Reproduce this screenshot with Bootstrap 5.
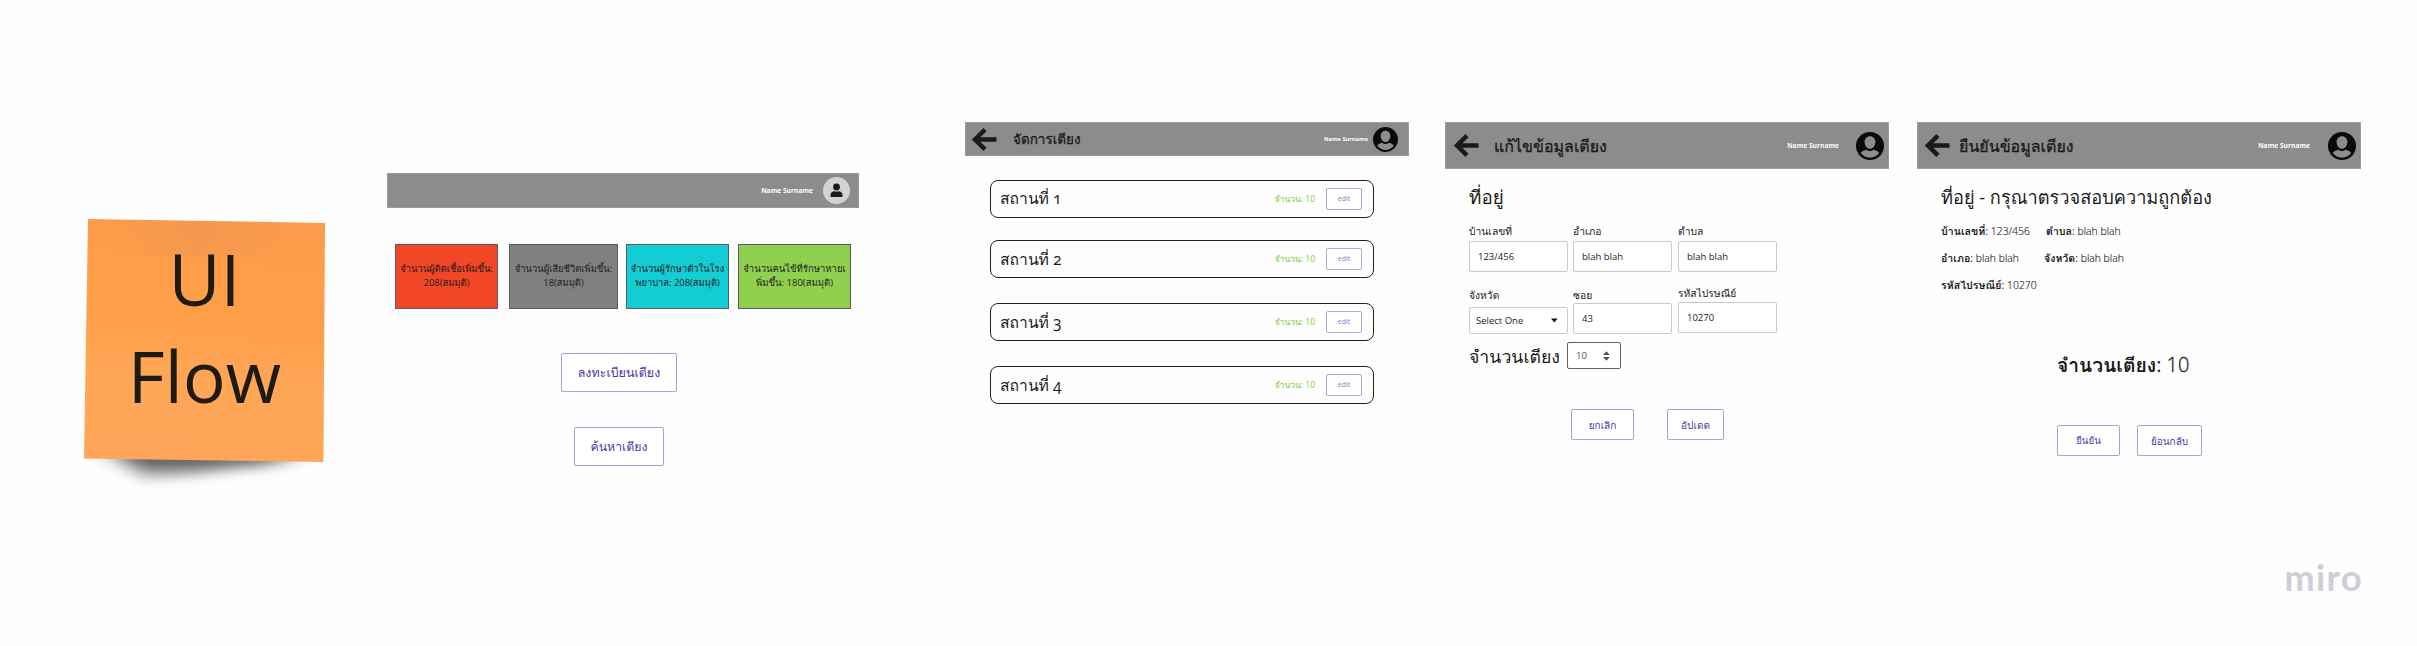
<!DOCTYPE html>
<html lang="th">
<head>
<meta charset="utf-8">
<meta name="viewport" content="width=device-width, initial-scale=1">
<title>UI Flow</title>
<link href="https://cdn.jsdelivr.net/npm/bootstrap@5.3.0/dist/css/bootstrap.min.css" rel="stylesheet">
<style>
body{width:2417px;height:646px;overflow:hidden;background:#fefefe;color:#1a1a1a;font-family:"Open Sans",Loma,"Noto Sans Thai",sans-serif;font-size:10px;line-height:14px}
/* board */
.board{height:540px}
.sticky-note{width:240px;margin:200px 0 0 84px;height:320px}
.sticky-bg{left:-24px;top:0}
.sticky-text{font-size:71.5px;line-height:97px;padding:30px 0 0 1px;width:240px;color:#1e1a14}
/* shared bar */
.topbar{background:#8c8c8c;border:1px solid #9c9c9c;height:47px}
.topbar .title{color:#1a1a1a;line-height:24px;-webkit-text-stroke:.3px #1a1a1a}
.user-name{color:#fff;font-weight:700;line-height:12px;font-size:6.7px}
.btn-wire{border:1px solid #a3a3d6;border-radius:2px;background:#fff;color:#3f3d9e;padding:0;line-height:14px;display:flex;align-items:center;justify-content:center}
/* home */
.home{width:472px;margin:173px 0 0 63px}
.home .topbar{height:35px}
.stat{height:65px;border:1px solid #5c5c5c;font-size:9.4px;line-height:14px;padding-top:17px;white-space:nowrap;text-align:center;color:#241c1c}
.stat-red{width:103px;background:#f24726;margin-right:11px}
.stat-gray{width:109px;background:#808080;margin-right:8px}
.stat-cyan{width:103px;background:#12cdd4;margin-right:9px}
.stat-green{width:113px;background:#8fd14f;font-size:9.5px}
/* list */
.places{width:444px;margin:122px 0 0 106px}
.places .topbar{height:34px}
.place{width:384px;height:38px;border:1.4px solid #222;border-radius:8px;margin-left:25px;padding:0 11px 0 9px}
.place-name{font-size:15.7px;line-height:24px;margin-top:-1px}
.place-name .num{font-variant-numeric:oldstyle-nums}
.place-qty{color:#82cc3c;font-size:8.5px;margin-right:11px;white-space:nowrap}
.place .btn-wire{width:36px;height:22px;font-size:7px;color:#7f7fc6;border-color:#a9addc}
/* form */
.form-screen{width:444px;margin:122px 0 0 36px}
.field-label{font-size:10.3px;line-height:14px;white-space:nowrap}
.fields{margin-left:24px}
.box{border:1px solid #c9c9c9;border-radius:2px;background:#fff;width:99px;height:31px;padding-left:8px;display:flex;align-items:center;font-size:9.5px}
.spin{border:1.3px solid #606060;width:54px;height:27px;padding:0 10px 0 8px;color:#555}
/* confirm */
.confirm{width:444px;margin:122px 0 0 28px}
.facts{margin-left:24px;font-size:10.6px;white-space:nowrap}
.facts .val,.total .val{font-weight:300}
.facts .val{font-size:10.4px;-webkit-text-stroke:.15px #1a1a1a}
.total .val{-webkit-text-stroke:.3px #1a1a1a}
.facts .key{font-weight:700}
.facts>div{height:27px}
.brand{font-family:"Lato",sans-serif;font-weight:700;font-size:36px;line-height:40px;color:#cfcdd8;letter-spacing:1.4px}
</style>
</head>
<body>
<svg class="d-none">
  <symbol id="arrow" viewBox="0 0 25 25"><path d="M13 2.6 3 12.5l10 9.900M3.500 12.500h21" fill="none" stroke="#1a1a1a" stroke-width="4.4"/></symbol>
  <symbol id="avatar" viewBox="0 0 28 28"><circle cx="14" cy="14" r="14" fill="#090909"/><path d="M14 4.200c3.300 0 5.400 2.500 5.400 5.800 0 3.400-2.300 6.800-5.400 6.800S8.600 13.400 8.600 10c0-3.300 2.100-5.800 5.400-5.800zM4.800 21c1.200-1.900 3.400-2.900 5.600-3.300 1 .9 2.200 1.400 3.600 1.400s2.600-.5 3.600-1.400c2.200.4 4.400 1.400 5.600 3.300-2.200 2.900-5.500 4.700-9.200 4.700S7 23.900 4.800 21z" fill="#8c8c8c"/></symbol>
</svg>
<main class="board d-flex align-items-start">
  <section class="sticky-note position-relative flex-shrink-0">
    <svg class="sticky-bg position-absolute" width="300" height="320" viewBox="0 0 300 320">
      <defs>
        <linearGradient id="paper" x1="0.1" y1="0" x2="0" y2="1"><stop offset="0" stop-color="#fc9b4b"/><stop offset=".15" stop-color="#ff9d48"/><stop offset=".4" stop-color="#ff9f4a"/><stop offset=".62" stop-color="#ffa757"/><stop offset="1" stop-color="#ffa55a"/></linearGradient>
        <linearGradient id="top" x1="0" x2="1"><stop offset="0" stop-color="#ee9650" stop-opacity="0"/><stop offset=".45" stop-color="#ee9650" stop-opacity=".6"/><stop offset="1" stop-color="#ee9650" stop-opacity="0"/></linearGradient>
        <filter id="soft" x="-20%" y="-60%" width="140%" height="240%"><feGaussianBlur stdDeviation="6"/></filter>
      </defs>
      <path d="M34 252Q140 250 250 256Q226 268 185 270Q125 280 82 280Q62 268 34 254Z" fill="#000" opacity=".22" filter="url(#soft)"/>
      <path d="M54 250H236Q215 264 175 265Q120 271 88 269Q66 262 54 250Z" fill="#000" opacity=".5" filter="url(#soft)"/>
      <path d="M28 19 265 23 263.500 262 24 258.500Z" fill="url(#paper)"/>
      <path d="M50 20 240 22.500V54L50 57Z" fill="url(#top)"/>
    </svg>
    <div class="sticky-text position-relative text-center">UI<br>Flow</div>
  </section>

  <section class="home flex-shrink-0">
    <div class="topbar d-flex align-items-center justify-content-end pe-2">
      <span class="user-name" style="margin-right:10px">Name Surname</span>
      <svg width="27" height="27" viewBox="0 0 27 27"><circle cx="13.500" cy="13.500" r="13.500" fill="#d3d3d3"/><circle cx="13.500" cy="10" r="3.400" fill="#1a1a1a"/><path d="M7.500 20v-1.800c0-2.500 1.800-4 4-4 1.300.6 2.700.6 4 0 2.200 0 4 1.500 4 4V20z" fill="#1a1a1a"/></svg>
    </div>
    <div class="d-flex" style="margin:36px 0 0 8px">
      <div class="stat stat-red">จำนวนผู้ติดเชื้อเพิ่มขึ้น:<br>208(สมมุติ)</div>
      <div class="stat stat-gray">จำนวนผู้เสียชีวิตเพิ่มขึ้น:<br>18(สมมุติ)</div>
      <div class="stat stat-cyan">จำนวนผู้รักษาตัวในโรง<br>พยาบาล: 208(สมมุติ)</div>
      <div class="stat stat-green">จำนวนคนไข้ที่รักษาหายเ<br>พิ่มขึ้น: 180(สมมุติ)</div>
    </div>
    <div class="d-flex flex-column align-items-center" style="margin:44px 8px 0 0;gap:35px">
      <button class="btn btn-wire" style="width:116px;height:39px;font-size:12.500px">ลงทะเบียนเตียง</button>
      <button class="btn btn-wire" style="width:90px;height:39px;font-size:12.300px">ค้นหาเตียง</button>
    </div>
  </section>

  <section class="places flex-shrink-0">
    <div class="topbar d-flex align-items-center" style="padding:0 10px 0 6px">
      <svg width="25" height="25"><use href="#arrow"/></svg>
      <span class="title" style="font-size:13.500px;margin-left:16px">จัดการเตียง</span>
      <span class="user-name ms-auto" style="font-size:5.700px;margin-right:5px">Name Surname</span>
      <svg width="25" height="25"><use href="#avatar"/></svg>
    </div>
    <div class="place d-flex align-items-center" style="margin-top:23.500px"><span class="place-name me-auto">สถานที่ <span class="num">1</span></span><span class="place-qty">จำนวน: 10</span><button class="btn btn-wire">edit</button></div>
    <div class="place d-flex align-items-center" style="margin-top:22.500px"><span class="place-name me-auto">สถานที่ <span class="num">2</span></span><span class="place-qty">จำนวน: 10</span><button class="btn btn-wire">edit</button></div>
    <div class="place d-flex align-items-center" style="margin-top:25px"><span class="place-name me-auto">สถานที่ <span class="num">3</span></span><span class="place-qty">จำนวน: 10</span><button class="btn btn-wire">edit</button></div>
    <div class="place d-flex align-items-center" style="margin-top:25px"><span class="place-name me-auto">สถานที่ <span class="num">4</span></span><span class="place-qty">จำนวน: 10</span><button class="btn btn-wire">edit</button></div>
  </section>

  <section class="form-screen flex-shrink-0">
    <div class="topbar d-flex align-items-center" style="padding:0 4px 0 8px">
      <svg width="25" height="25"><use href="#arrow"/></svg>
      <span class="title" style="font-size:16px;margin-left:15px">แก้ไขข้อมูลเตียง</span>
      <span class="user-name ms-auto" style="margin-right:17px">Name Surname</span>
      <svg width="28" height="28"><use href="#avatar"/></svg>
    </div>
    <div class="fields">
      <div style="font-size:18.800px;line-height:28px;margin-top:14px">ที่อยู่</div>
      <div class="d-flex" style="margin-top:13px">
        <div style="width:104px"><div class="field-label">บ้านเลขที่</div><div class="box" style="margin-top:3px">123/456</div></div>
        <div style="width:105px"><div class="field-label">อำเภอ</div><div class="box" style="margin-top:3px">blah blah</div></div>
        <div><div class="field-label">ตำบล</div><div class="box" style="margin-top:3px">blah blah</div></div>
      </div>
      <div class="d-flex align-items-end" style="margin-top:14px">
        <div style="width:104px"><div class="field-label">จังหวัด</div><div class="box" style="height:27px;margin-top:5px;padding:0 9px 0 6px">Select One<svg class="ms-auto" width="7" height="5"><path d="M0 .5h6.500L3.250 4.500z" fill="#0a0a3c"/></svg></div></div>
        <div style="width:105px"><div class="field-label">ซอย</div><div class="box" style="margin-top:1px">43</div></div>
        <div><div class="field-label">รหัสไปรษณีย์</div><div class="box" style="margin:2px 0 1px">10270</div></div>
      </div>
      <div class="d-flex align-items-center" style="margin-top:8px">
        <span style="font-size:17.700px;line-height:26px;width:98px;white-space:nowrap">จำนวนเตียง</span>
        <div class="box spin">10<svg class="ms-auto" width="7" height="10"><path d="M0 4 3.400.3 6.800 4zM0 6h6.800L3.400 9.700z" fill="#555"/></svg></div>
      </div>
      <div class="d-flex" style="margin:40px 0 0 102px;gap:33px">
        <button class="btn btn-wire" style="width:63px;height:31px;font-size:10px">ยกเลิก</button>
        <button class="btn btn-wire" style="width:57px;height:31px;font-size:10px">อัปเดต</button>
      </div>
    </div>
  </section>

  <section class="confirm flex-shrink-0">
    <div class="topbar d-flex align-items-center" style="padding:0 4px 0 7px">
      <svg width="25" height="25"><use href="#arrow"/></svg>
      <span class="title" style="font-size:16px;margin-left:9px">ยืนยันข้อมูลเตียง</span>
      <span class="user-name ms-auto" style="margin-right:18px">Name Surname</span>
      <svg width="28" height="28"><use href="#avatar"/></svg>
    </div>
    <div class="facts">
      <div style="font-size:18.200px;line-height:28px;margin-top:14px;height:28px">ที่อยู่ - กรุณาตรวจสอบความถูกต้อง</div>
      <div class="d-flex" style="margin-top:13px"><span style="width:105px"><span class="key">บ้านเลขที่</span>: <span class="val">123/456</span></span><span><span class="key">ตำบล</span>: <span class="val">blah blah</span></span></div>
      <div class="d-flex"><span style="width:103px"><span class="key">อำเภอ</span>: <span class="val">blah blah</span></span><span><span class="key">จังหวัด</span>: <span class="val">blah blah</span></span></div>
      <div class="d-flex"><span><span class="key">รหัสไปรษณีย์</span>: <span class="val">10270</span></span></div>
    </div>
    <div class="total" style="margin:46px 0 0 140px;font-size:20px;line-height:28px"><b style="font-size:19.300px">จำนวนเตียง</b>: <span class="val">10</span></div>
    <div class="d-flex" style="margin:46px 0 0 140px;gap:17px">
      <button class="btn btn-wire" style="width:63px;height:31px;font-size:9.700px">ยืนยัน</button>
      <button class="btn btn-wire" style="width:65px;height:31px;font-size:10px">ย้อนกลับ</button>
    </div>
  </section>
</main>
<footer class="d-flex justify-content-end" style="padding:17px 54px 0 0"><span class="brand">miro</span></footer>
<script src="https://cdn.jsdelivr.net/npm/bootstrap@5.3.0/dist/js/bootstrap.bundle.min.js"></script>
</body>
</html>
